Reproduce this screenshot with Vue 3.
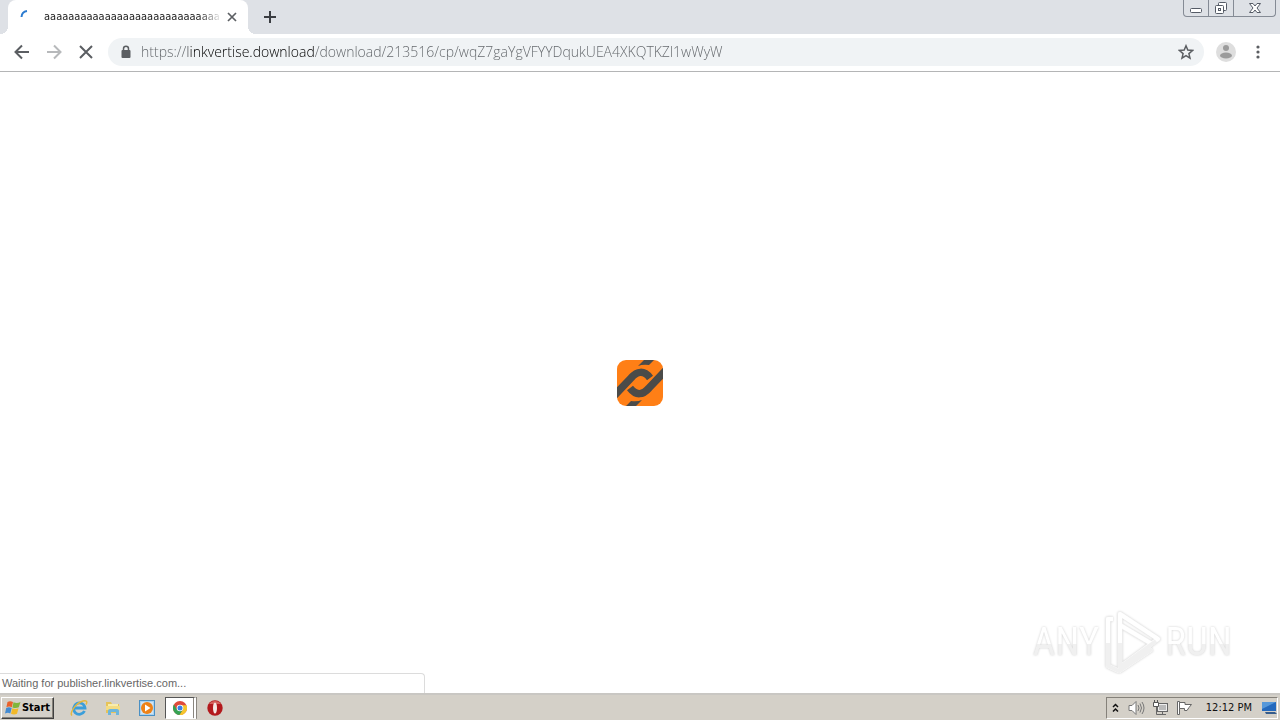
<script setup>
import { ref } from 'vue'

const address = ref('https://linkvertise.download/download/213516/cp/wqZ7gaYgVFYYDqukUEA4XKQTKZl1wWyW')
const title = 'a'.repeat(29)
</script>

<template>
  <div class="desktop">
    <header class="strip">
      <div class="tab">
        <svg class="spinner" width="16" height="16" viewBox="0 0 16 16"><path d="M1.500 8A6.500 6.500 0 0 1 7 2" fill="none" stroke="#2b7bd0" stroke-width="2" /></svg>
        <span class="tab-title">{{ title }}</span>
        <button class="tab-close" aria-label="Close tab">
          <svg width="10" height="10" viewBox="0 0 10 10"><path d="M1 1L9 9M9 1L1 9" stroke="#5c5f63" stroke-width="1.7" /></svg>
        </button>
      </div>
      <button class="new-tab" aria-label="New tab">
        <svg width="12" height="12" viewBox="0 0 12 12"><path d="M6 0V12M0 6H12" stroke="#3a3d42" stroke-width="2" /></svg>
      </button>
      <div class="window-controls">
        <button aria-label="Minimize">
          <svg width="14" height="14" viewBox="0 0 14 14"><rect x="1.500" y="7.500" width="11" height="4" rx="1" fill="#fff" stroke="#555b66" /></svg>
        </button>
        <button aria-label="Restore">
          <svg width="14" height="14" viewBox="0 0 14 14"><g fill="#fff" stroke="#555b66"><rect x="4.500" y="1.500" width="8" height="8" rx="1" /><rect x="1.500" y="4.500" width="8" height="8" rx="1" /><rect x="4.500" y="7.500" width="2" height="2" /></g></svg>
        </button>
        <button class="wide" aria-label="Close window">
          <svg width="14" height="14" viewBox="0 0 14 14"><path d="M1.500 2.500H5L7 5L9 2.500H12.500L9 7L12.500 11.500H9L7 9L5 11.500H1.500L5 7Z" fill="#fff" stroke="#555b66" /></svg>
        </button>
      </div>
    </header>

    <nav class="toolbar">
      <button class="nav-button" aria-label="Back">
        <svg width="16" height="16" viewBox="0 0 16 16"><path d="M15 8H2M8 1.500L1.500 8L8 14.500" fill="none" stroke="#5b5e62" stroke-width="2" /></svg>
      </button>
      <button class="nav-button" aria-label="Forward">
        <svg width="16" height="16" viewBox="0 0 16 16"><path d="M1 8H14M8 1.500L14.500 8L8 14.500" fill="none" stroke="#b7b9bb" stroke-width="2" /></svg>
      </button>
      <button class="nav-button" aria-label="Stop">
        <svg width="16" height="16" viewBox="0 0 16 16"><path d="M2 2L14 14M14 2L2 14" stroke="#5b5e62" stroke-width="2" /></svg>
      </button>
      <div class="omnibox">
        <svg width="10" height="14" viewBox="0 0 10 14"><path d="M2.500 6V3.700a2.500 2.500 0 0 1 5 0V6" fill="none" stroke="#5b5e62" stroke-width="1.500" /><rect x="0.500" y="5" width="9" height="8" rx="1" fill="#5b5e62" /></svg>
        <input v-model="address" class="address" type="text" aria-label="Address" spellcheck="false">
        <button class="star" aria-label="Bookmark this page">
          <svg width="16" height="16" viewBox="0 0 16 16"><path d="M8 1.800L9.800 6.100L14.500 6.500L10.900 9.600L12 14.200L8 11.700L4 14.200L5.100 9.600L1.500 6.500L6.200 6.100Z" fill="none" stroke="#5b5e62" stroke-width="1.500" /></svg>
        </button>
      </div>
      <button class="profile" aria-label="Profile">
        <svg width="20" height="20" viewBox="0 0 20 20"><circle cx="10" cy="10" r="10" fill="#dedede" /><circle cx="10" cy="6" r="3" fill="#9b9b9b" /><ellipse cx="10" cy="13.500" rx="6" ry="3" fill="#9b9b9b" /></svg>
      </button>
      <button class="menu" aria-label="Menu">
        <svg width="4" height="14" viewBox="0 0 4 14"><g fill="#5b5e62"><circle cx="2" cy="2" r="1.600" /><circle cx="2" cy="7" r="1.600" /><circle cx="2" cy="12" r="1.600" /></g></svg>
      </button>
    </nav>

    <main class="page">
      <svg width="46" height="46" viewBox="0 0 46 46">
        <defs><clipPath id="tile"><rect width="46" height="46" rx="9" /></clipPath></defs>
        <g clip-path="url(#tile)">
          <rect width="46" height="46" fill="#ff7f16" />
          <g fill="none" stroke="#4b4b49" stroke-width="7.500">
            <path d="M-3 36L14 18C20 11 27 10 33 18" />
            <path d="M49 10L32 28C26 35 19 36 13 28" />
          </g>
          <path d="M21 6L27 0H37L32 5Q26 4 21 6ZM25 40L19 46H9L14 41Q20 42 25 40Z" fill="#4b4b49" />
        </g>
      </svg>

      <div class="watermark">
        <span>ANY</span>
        <svg width="58" height="62" viewBox="0 0 58 62">
          <g fill="none" stroke-linejoin="round">
            <g stroke="#f2f2f2" stroke-width="5"><path d="M17 3L55 28L17 56Z" /><path d="M10 8H5V55L16 60L49 38M17 14L49 33" /></g>
            <g stroke="#fff" stroke-width="4"><path d="M17 3L55 28L17 56Z" /><path d="M10 8H5V55L16 60L49 38M17 14L49 33" /></g>
            <path d="M5 32V55L16 60L49 38M17 32V56L53 30" stroke="#f0f0f0" stroke-width="4" />
          </g>
        </svg>
        <span>RUN</span>
      </div>
      <div class="status">Waiting for publisher.linkvertise.com...</div>
    </main>

    <footer class="taskbar">
      <button class="start">
        <svg width="16" height="16" viewBox="0 0 16 16"><path d="M2.500 2Q5 .3 8 2L6.800 7.200Q4 5.700 1.400 7.200Z" fill="#e9622c" /><path d="M8.500 2.300Q12 4 15.500 2L13.800 7.300Q11 8.700 7.400 7.500Z" fill="#80b63c" /><path d="M1.200 8Q4 6.500 6.700 8L5.300 13.500Q3 12 0 13.500Z" fill="#438bd2" /><path d="M7.300 8.300Q10.500 9.700 13.500 8.300L12 13.800Q9 15.200 6 13.800Z" fill="#f2b929" /></svg>
        <span>Start</span>
      </button>
      <div class="apps">
        <button class="app" aria-label="Internet Explorer">
          <svg width="18" height="18" viewBox="0 0 18 18"><path d="M14.500 12A5.700 5.700 0 1 1 15 9H5" fill="none" stroke="#3b9eda" stroke-width="2.800" /><path d="M2 16.500C-1 14 6 4 13 2C18 .7 17 4 16 5.500" fill="none" stroke="#e4b73d" stroke-width="1.400" /></svg>
        </button>
        <button class="app" aria-label="Explorer">
          <svg width="18" height="18" viewBox="0 0 18 18"><path d="M2 3H7L8 5H15V14H2Z" fill="#e6c359" /><path d="M4 5H14V10H4Z" fill="#f9edab" /><path d="M2 7H16V11H2Z" fill="#f4dc82" /><path d="M4 16V12Q4 10 6 10H13Q15 10 15 12V16H12V13H7V16Z" fill="#6db6dc" /></svg>
        </button>
        <button class="app" aria-label="Media Player">
          <svg width="18" height="18" viewBox="0 0 18 18"><rect x="1.500" y="1.500" width="15" height="15" fill="#a9d2f0" stroke="#4a90c4" /><rect x="3" y="3" width="12" height="12" fill="#cfe4f4" /><circle cx="9" cy="9" r="6" fill="#ee8217" /><path d="M7 5.500L12.500 9L7 12.500Z" fill="#fff" /></svg>
        </button>
        <button class="app active" aria-label="Chrome">
          <svg width="14" height="14" viewBox="0 0 14 14"><circle cx="7" cy="7" r="7" fill="#e04a3b" /><path d="M.9 3.500A7 7 0 0 0 6.500 14L10 8.700L4 8.700Z" fill="#35a253" /><path d="M6.500 14A7 7 0 0 0 13.500 4.200H7L10 8.700Z" fill="#f5c62c" /><circle cx="7" cy="7" r="3.300" fill="#fff" /><circle cx="7" cy="7" r="2.500" fill="#397fe5" /></svg>
        </button>
        <button class="app" aria-label="Opera">
          <svg width="16" height="16" viewBox="0 0 16 16"><circle cx="8" cy="8" r="7.700" fill="#b3191d" /><path d="M2 4A7.500 7.500 0 0 1 14 4Z" fill="#d5605c" /><ellipse cx="8" cy="8" rx="2" ry="5.500" fill="#f5e9e5" /></svg>
        </button>
      </div>
      <div class="tray">
        <button aria-label="Show hidden icons">
          <svg width="7" height="10" viewBox="0 0 7 10"><path d="M1 4L3.500 1.500L6 4M1 8.500L3.500 6L6 8.500" fill="none" stroke="#111" stroke-width="1.500" /></svg>
        </button>
        <div class="tray-icons">
          <button aria-label="Volume">
            <svg width="17" height="16" viewBox="0 0 17 16"><path d="M1 5.500H4L8 1.500V14.500L4 10.500H1Z" fill="#fff" stroke="#777" /><path d="M10 5Q12 8 10 11M12 3.500Q15 8 12 12.500M14 2Q18 8 14 14" fill="none" stroke="#777" /></svg>
          </button>
          <button aria-label="Network">
            <svg width="17" height="16" viewBox="0 0 17 16"><rect x="5.500" y="3.500" width="10" height="8" fill="#bababa" stroke="#666" /><path d="M6.500 4.500H14.500V10.500H6.500Z" fill="none" stroke="#eee" /><path d="M1.500 2.500H6.500V6.500H1.500ZM2.500 0V2M5.500 0V2" fill="#fff" stroke="#555" /><path d="M4.500 7V14.500H14M10.500 12V14" fill="none" stroke="#666" /></svg>
          </button>
          <button aria-label="Action Center">
            <svg width="17" height="16" viewBox="0 0 17 16"><path d="M1.500 1.500H3.500V14.500H1.500Z" fill="#fff" stroke="#666" /><path d="M3.500 2.500H9V4.500H15.500L13 7.500L11 10.500H8.500V8.500H3.500Z" fill="#fff" stroke="#666" /></svg>
          </button>
        </div>
        <time>12:12 PM</time>
        <button aria-label="Show desktop">
          <svg width="16" height="14" viewBox="0 0 16 14"><path d="M1 1H15V10H1Z" fill="#2469bd" /><path d="M1 1H15L1 8Z" fill="#5698da" /><path d="M4 11H14L16 13H5Z" fill="#355c8c" /></svg>
        </button>
      </div>
    </footer>
  </div>
</template>

<style>
body {
  margin: 0;
}
</style>

<style scoped>
.desktop {
  display: flex;
  flex-direction: column;
  min-height: 100vh;
  background: #fff;
  color: #222;
  font: 11px/14px "DejaVu Sans Condensed", "Open Sans", sans-serif;
}

button {
  display: flex;
  align-items: center;
  justify-content: center;
  flex: none;
  padding: 0;
  border: 0;
  background: none;
  color: inherit;
  font: inherit;
}

svg {
  display: block;
  flex: none;
}

.strip {
  display: flex;
  height: 34px;
  padding-left: 8px;
  background: #dee1e6;
}

.tab {
  position: relative;
  display: flex;
  align-items: center;
  box-sizing: border-box;
  width: 240px;
  padding: 0 10px 0 12px;
  border-radius: 8px 8px 0 0;
  background: #fff;
}

.tab::before,
.tab::after {
  content: "";
  position: absolute;
  bottom: 0;
  width: 8px;
  height: 8px;
}

.tab::before {
  right: 100%;
  background: radial-gradient(circle at 0 0, #dee1e6 8px, #fff 8px);
}

.tab::after {
  left: 100%;
  background: radial-gradient(circle at 100% 0, #dee1e6 8px, #fff 8px);
}

.tab-title {
  flex: 1;
  min-width: 0;
  margin: 0 4px 0 8px;
  white-space: nowrap;
  mask-image: linear-gradient(to right, #000 155px, transparent);
}

.tab-close {
  width: 12px;
}

.new-tab {
  width: 28px;
  margin-left: 8px;
}

.window-controls {
  display: flex;
  align-self: flex-start;
  height: 16px;
  margin: 0 4px 0 auto;
  border: 1px solid #858b95;
  border-top: 0;
  border-radius: 0 0 4px 4px;
}

.window-controls button {
  width: 24px;
}

.window-controls button + button {
  width: 25px;
  border-left: 1px solid #858b95;
}

.window-controls button.wide {
  width: 42px;
}

.toolbar {
  display: flex;
  align-items: center;
  gap: 16px;
  height: 36px;
  padding: 0 16px 1px 14px;
  border-bottom: 1px solid #b4b5b6;
}

.nav-button {
  width: 16px;
  height: 28px;
}

.omnibox {
  display: flex;
  align-items: center;
  flex: 1;
  box-sizing: border-box;
  height: 28px;
  margin-left: -2px;
  padding: 0 10px 0 13px;
  border-radius: 14px;
  background: #f0f3f5;
}

.address {
  flex: 1;
  min-width: 0;
  height: 20px;
  margin: 0 10px;
  padding: 0;
  border: 0;
  outline: 0;
  background: linear-gradient(to right, #5f6367 47px, #000 47px, #000 174px, #5f6367 174px);
  background-clip: text;
  color: transparent;
  font: 300 14px/20px "Open Sans", sans-serif;
}

.profile {
  margin-left: -4px;
}

.menu {
  width: 12px;
}

.page {
  position: relative;
  display: flex;
  flex: 1;
  align-items: center;
  justify-content: center;
  padding-top: 1px;
}

.watermark {
  position: absolute;
  right: 48px;
  bottom: 20px;
  display: flex;
  align-items: center;
  gap: 4px;
  font: 400 39px/60px "Roboto Condensed", "Open Sans Condensed", sans-serif;
  filter: drop-shadow(0 0 1px #cfcfcf);
}

.watermark span {
  background: linear-gradient(to bottom, #fff 32px, #f0f0f0 32px);
  background-clip: text;
  color: transparent;
}

.status {
  position: absolute;
  bottom: 0;
  left: 0;
  box-sizing: border-box;
  width: 425px;
  padding: 2px 3px 3px 2px;
  border: 1px solid #dcdcdc;
  border-width: 1px 1px 0 0;
  border-radius: 0 4px 0 0;
  background: #fff;
  color: #666;
  font-family: "Liberation Sans", sans-serif;
}

.taskbar {
  display: flex;
  align-items: center;
  height: 25px;
  padding: 0 2px 0 1px;
  border-top: 2px solid #c9c7c3;
  background: #d4d0c8;
}

.start {
  gap: 1px;
  box-sizing: border-box;
  width: 53px;
  height: 22px;
  border: 1px solid;
  border-color: #fff #404040 #404040 #fff;
  box-shadow: inset -1px -1px #858179;
  color: #000;
  font-weight: 700;
}

.apps {
  display: flex;
  gap: 2px;
  margin-left: 9px;
}

.app {
  width: 32px;
  height: 22px;
}

.active {
  box-sizing: border-box;
  border: 1px solid;
  border-color: #555 #fff #fff #555;
  border-right: 4px double #8a867f;
  background: #fff;
}

.tray {
  display: flex;
  align-items: center;
  gap: 9px;
  box-sizing: border-box;
  height: 22px;
  margin-left: auto;
  padding: 0 0 0 5px;
  border: 1px solid;
  border-color: #85817a #fff #fff #85817a;
  color: #111;
}

.tray-icons {
  display: flex;
  gap: 7px;
}

.tray time {
  margin-left: 4px;
}
</style>
